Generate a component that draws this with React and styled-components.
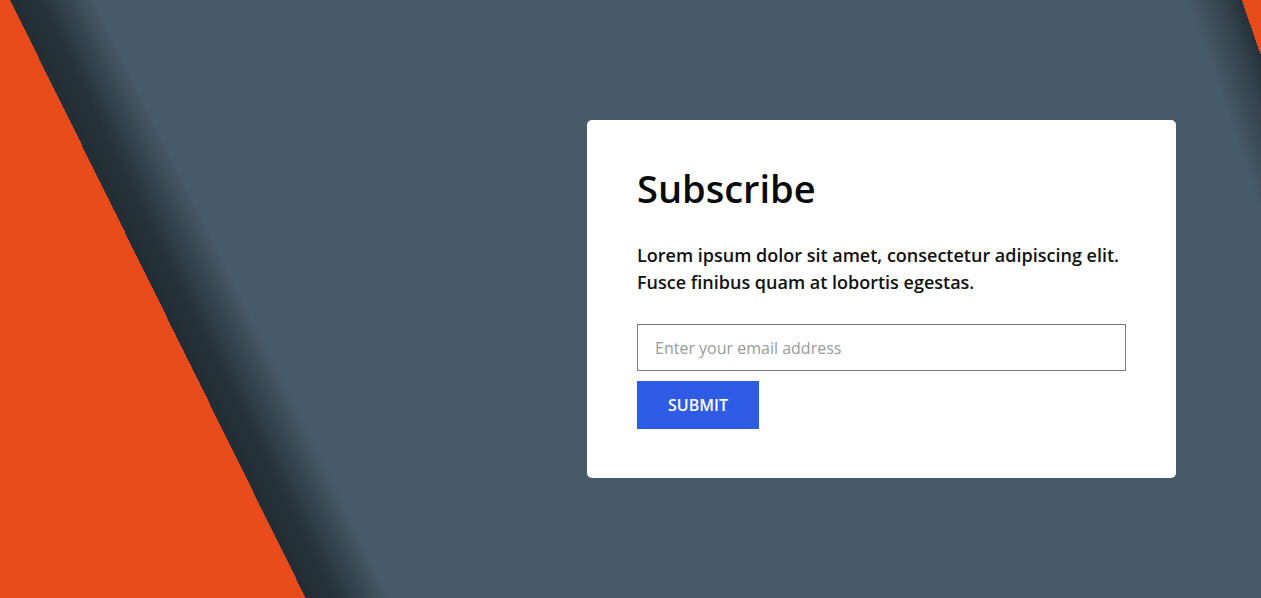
import React from 'react';
import styled, { createGlobalStyle } from 'styled-components';

const GlobalStyle = createGlobalStyle`
  html, body {
    margin: 0;
    padding: 0;
  }
  body {
    font-family: "Open Sans", "Liberation Sans", sans-serif;
  }
  * {
    box-sizing: border-box;
  }
`

const Page = styled.div`
  min-height: 100vh;
  display: flex;
  justify-content: flex-end;
  align-items: flex-start;
  padding: 120px 85px 0 0;
  background:
    linear-gradient(70.9deg, transparent 1318px, rgba(37, 49, 58, 0.55) 1350px, #25313a 1369px, #e84c1a 1369px),
    linear-gradient(63.7deg, #e84c1a 274px, #222d35 274px, #26323b 300px, #35454f 324px, #475a67 350px);
`

const Card = styled.div`
  width: 589px;
  height: 358px;
  background: #fff;
  border-radius: 5px;
  padding: 50px;
`

const Title = styled.h1`
  margin: 0 0 36px;
  font-size: 38px;
  line-height: 36px;
  font-weight: 600;
  color: #0a0a0a;
`

const Text = styled.p`
  margin: 0 0 28px;
  font-size: 18px;
  line-height: 27px;
  font-weight: 600;
  color: #111;
`

const EmailInput = styled.input`
  display: block;
  width: 489px;
  height: 47px;
  border: 1px solid #7a7a7a;
  padding: 0 17px;
  font-family: inherit;
  font-size: 16px;
  color: #333;
  outline: none;
  &::placeholder {
    color: #9a9a9a;
  }
`

const SubmitButton = styled.button`
  display: block;
  margin-top: 10px;
  width: 122px;
  height: 48px;
  border: none;
  background: #2f5ce7;
  color: #fff;
  font-family: inherit;
  font-size: 16px;
  font-weight: 600;
  text-transform: uppercase;
  cursor: pointer;
`

export default function App() {
  return (
    <Page>
      <GlobalStyle />
      <Card>
        <Title>Subscribe</Title>
        <Text>
          Lorem ipsum dolor sit amet, consectetur adipiscing elit.
          <br />
          Fusce finibus quam at lobortis egestas.
        </Text>
        <EmailInput type="email" placeholder="Enter your email address" />
        <SubmitButton>Submit</SubmitButton>
      </Card>
    </Page>
  );
}
